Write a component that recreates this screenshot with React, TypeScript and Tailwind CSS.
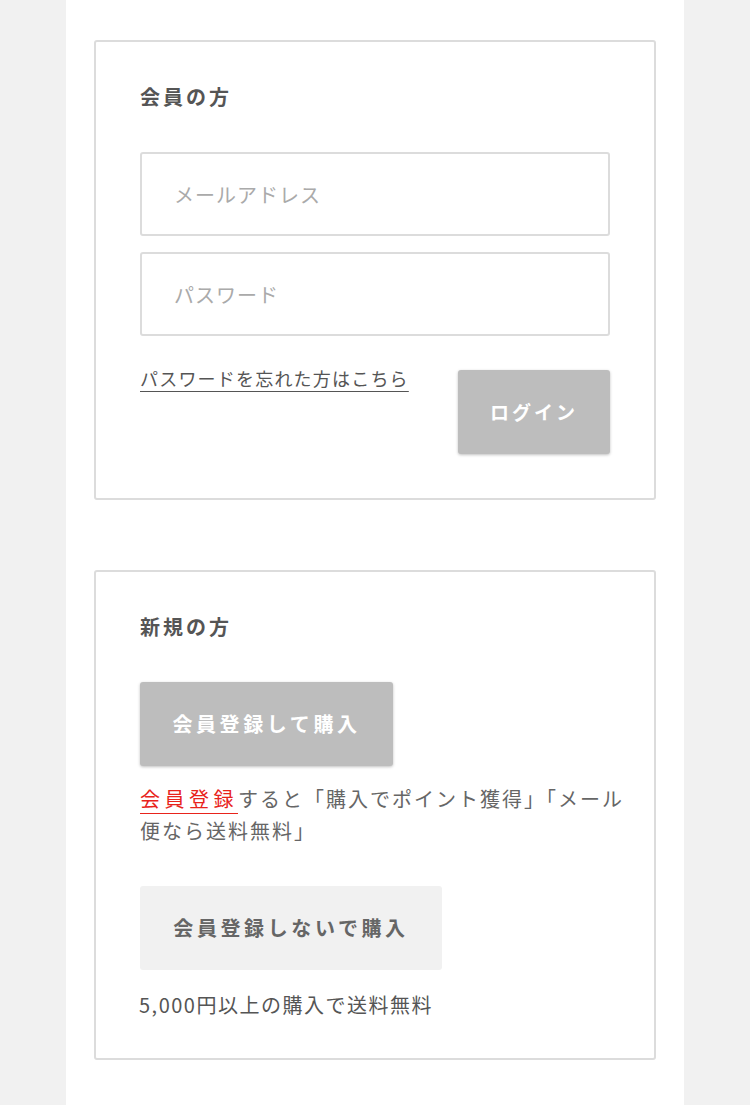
export default function App() {
  return (
    <div className="min-h-[1105px] w-full bg-[#f1f1f1] font-['Noto_Sans_CJK_JP',sans-serif]">
      <main className="mx-auto min-h-[1105px] w-[618px] bg-white px-[28px] pt-[40px] pb-[45px]">
        {/* 会員の方 */}
        <section className="rounded-[3px] border-2 border-[#dcdcdc] px-[44px] pt-[41px] pb-[44px]">
          <h2 className="text-[20px] leading-[28px] font-bold tracking-[3px] text-[#555]">会員の方</h2>

          <div className="mt-[41px] flex flex-col gap-[16px]">
            <input
              type="email"
              placeholder="メールアドレス"
              className="h-[84px] w-full rounded-[3px] border-2 border-[#dcdcdc] px-[32px] text-[20px] tracking-[1px] text-[#555] outline-none placeholder:text-[#aaa]"
            />
            <input
              type="password"
              placeholder="パスワード"
              className="h-[84px] w-full rounded-[3px] border-2 border-[#dcdcdc] px-[32px] text-[20px] tracking-[1px] text-[#555] outline-none placeholder:text-[#aaa]"
            />
          </div>

          <div className="mt-[34px] flex items-start justify-between">
            <a href="#" className="-mt-[3px] text-[18px] leading-[22px] tracking-[1.2px] text-[#555] underline decoration-[#555] decoration-1 underline-offset-[5px]">
              パスワードを忘れた方はこちら
            </a>
            <button className="h-[84px] w-[152px] rounded-[3px] bg-[#bdbdbd] text-[19px] font-bold tracking-[3px] text-white shadow-[0_1px_3px_rgba(0,0,0,0.25)]">
              ログイン
            </button>
          </div>
        </section>

        {/* 新規の方 */}
        <section className="mt-[70px] rounded-[3px] border-2 border-[#dcdcdc] px-[44px] pt-[41px] pb-[39px]">
          <h2 className="text-[20px] leading-[28px] font-bold tracking-[3px] text-[#555]">新規の方</h2>

          <button className="mt-[41px] h-[84px] w-[253px] rounded-[3px] bg-[#bdbdbd] text-[20px] font-bold tracking-[3.6px] text-white shadow-[0_1px_3px_rgba(0,0,0,0.25)]">
            会員登録して購入
          </button>

          <p className="mt-[17px] -mr-[30px] text-[20px] leading-[32px] tracking-[2px] text-[#666]">
            <a href="#" className="tracking-[4.5px] text-[#e8231b] underline decoration-[#e8231b] decoration-1 underline-offset-[6px]">会員登録</a>すると「購入でポイント獲得」「メール便なら送料無料」
          </p>

          <button className="mt-[39px] h-[84px] w-[302px] rounded-[3px] bg-[#f1f1f1] text-[20px] font-bold tracking-[3.6px] text-[#666]">
            会員登録しないで購入
          </button>

          <p className="mt-[21px] -ml-[1px] text-[20px] leading-[28px] tracking-[1.5px] text-[#555]">5,000円以上の購入で送料無料</p>
        </section>
      </main>
    </div>
  );
}
